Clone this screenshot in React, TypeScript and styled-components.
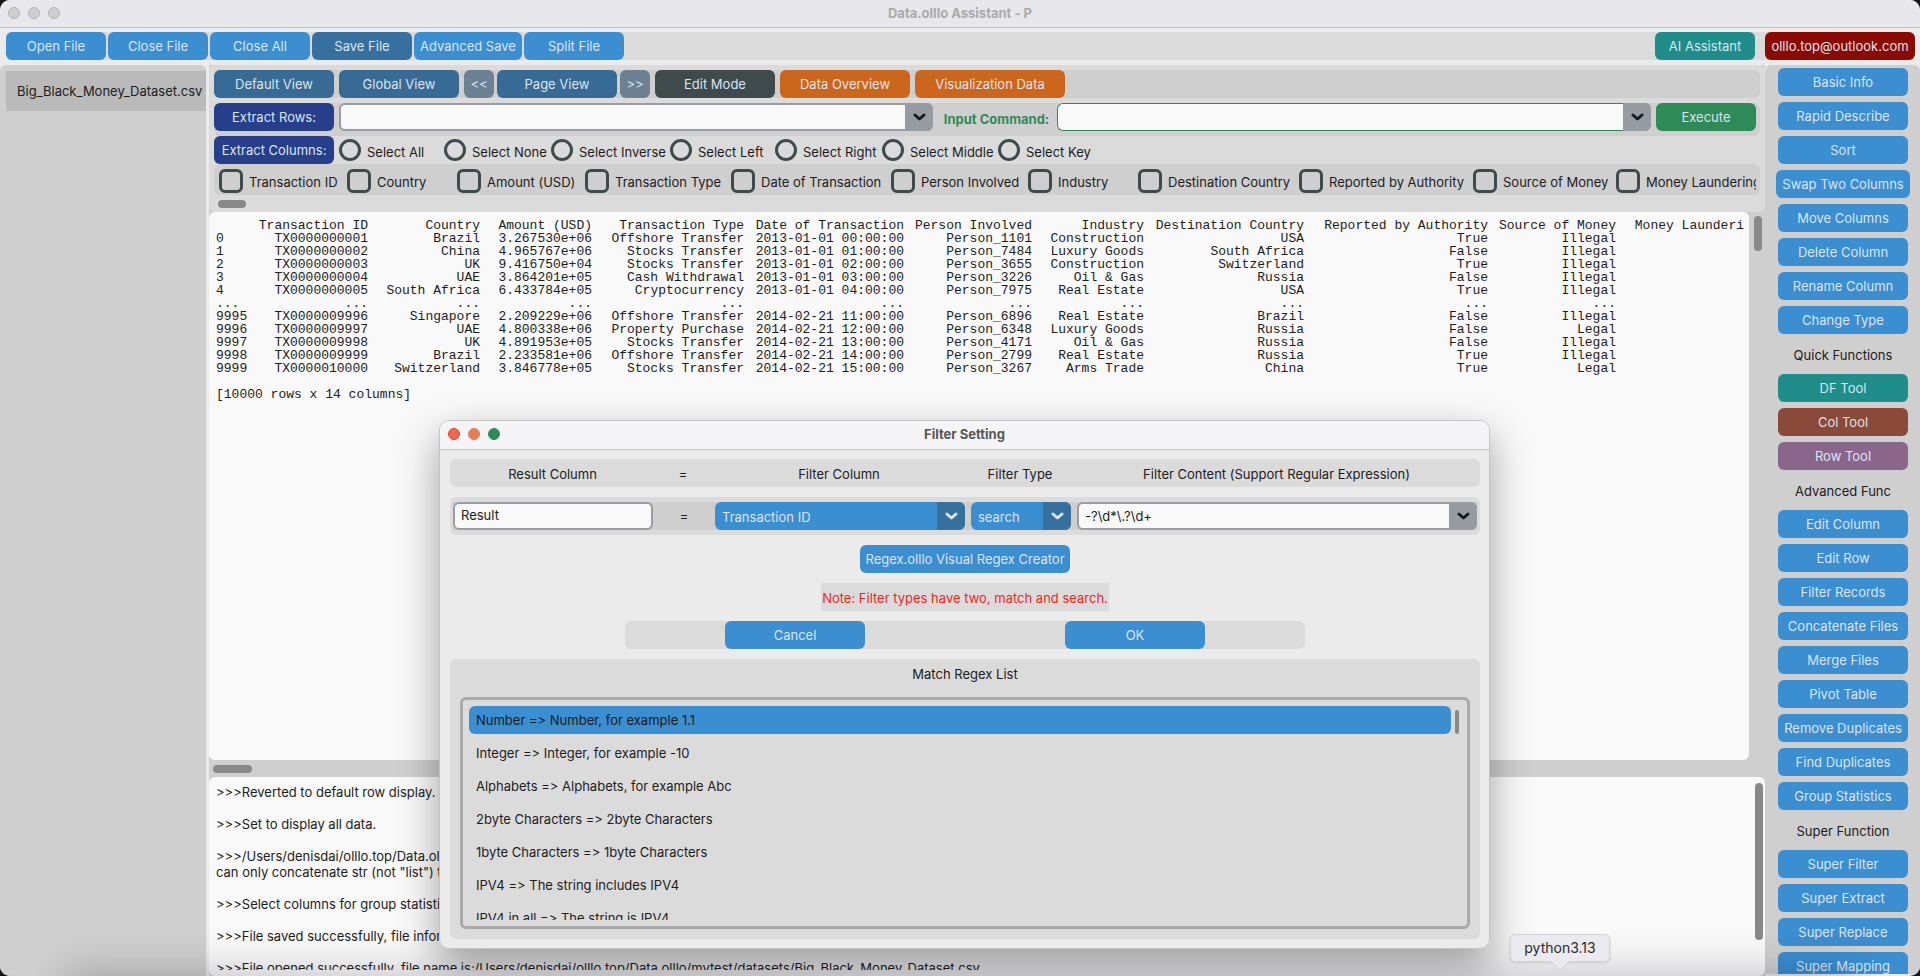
import React from "react";
import styled, { createGlobalStyle } from "styled-components";

const GlobalStyle = createGlobalStyle`
  *, *::before, *::after { box-sizing: border-box; }
  body {
    margin: 0;
    background: #161616;
    color: #1c1c1c;
    font-family: Inter, "Liberation Sans", sans-serif;
    font-size: 13px;
    font-feature-settings: "calt" 0;
    line-height: 16px;
    overflow: hidden;
  }
  button, input, select { font: inherit; margin: 0; }
`;

const tone = {
  blue: "#3b8ed0",
  steel: "#36709f",
  view: "#376a94",
  slate: "#6d8194",
  navy: "#273f8a",
  dark: "#3e4a4b",
  orange: "#cc661c",
  teal: "#1f8e8b",
  maroon: "#8b0a00",
  green: "#2e8b57",
  brown: "#8b4939",
  plum: "#8b668b",
};
type Tone = keyof typeof tone;

const AppWindow = styled.div`
  position: relative;
  display: flex;
  flex-direction: column;
  height: 100vh;
  overflow: hidden;
  border-radius: 10px;
  background: #ebebeb;
`;

const TitleBar = styled.header<{ $active?: boolean }>`
  position: relative;
  display: flex;
  flex: none;
  align-items: center;
  justify-content: center;
  height: ${(p) => (p.$active ? 29 : 28)}px;
  padding-bottom: 2px;
  border-bottom: 1px solid ${(p) => (p.$active ? "#c6c6c8" : "#bfbfc1")};
  background: ${(p) => (p.$active ? "#f5f5f7" : "#e8e8ec")};
  color: ${(p) => (p.$active ? "#565656" : "#aaaaaa")};
`;

const Title = styled.h1`
  margin: 0;
  font-size: 13px;
  font-weight: 700;
  line-height: 16px;
`;

const Lights = styled.div`
  position: absolute;
  left: 8px;
  top: 7px;
  display: flex;
  gap: 8px;
`;

const Light = styled.button<{ $fill: string; $edge: string }>`
  width: 12px;
  height: 12px;
  padding: 0;
  border: 1px solid ${(p) => p.$edge};
  border-radius: 50%;
  background: ${(p) => p.$fill};
`;

const Button = styled.button<{ $tone?: Tone; $w?: number }>`
  flex: none;
  width: ${(p) => (p.$w ? `${p.$w}px` : "100%")};
  height: 28px;
  padding: 0;
  border: 0;
  border-radius: 6px;
  background: ${(p) => tone[p.$tone ?? "blue"]};
  color: #dce4ee;
  white-space: nowrap;
`;

const Toolbar = styled.nav`
  flex: none;
  padding: 4px 5px 5px 6px;
`;

const ToolbarBand = styled.div`
  display: flex;
  gap: 2px;
  border-radius: 6px;
  background: #dbdbdb;
`;

const Account = styled.div`
  display: flex;
  gap: 10px;
  margin-left: auto;
`;

const Body = styled.div`
  display: flex;
  flex: 1;
  min-height: 0;
`;

const FilePanel = styled.aside`
  flex: none;
  width: 206px;
  margin-right: 3px;
  padding: 6px 0 0 6px;
  border-radius: 6px 6px 0 0;
  background: #cfcfcf;
`;

const FileItem = styled.button`
  width: 100%;
  height: 40px;
  padding: 0 0 0 11px;
  overflow: hidden;
  border: 0;
  background: #bababa;
  color: #1c1c1c;
  text-align: left;
  white-space: nowrap;
`;

const Main = styled.main`
  display: flex;
  flex: 1;
  flex-direction: column;
  min-width: 0;
  background: #cfcfcf;
`;

const ControlPanel = styled.section`
  flex: none;
  padding: 5px 5px 4px;
  border-radius: 6px;
  background: #dbdbdb;
`;

const ViewRow = styled.div`
  display: flex;
  gap: 5px;
  margin-bottom: 5px;
  border-radius: 6px;
  background: #cfcfcf;
`;

const Pager = styled.div`
  display: flex;
  gap: 3px;
`;

const CommandRow = styled.div`
  display: flex;
  gap: 5px;
  height: 33px;
  padding-right: 4px;
  border-radius: 6px;
  background: #cfcfcf;
`;

const CommandLabel = styled.label`
  flex: none;
  width: 114px;
  padding: 8px 0 0 3px;
  color: #2e8b57;
  font-weight: 700;
  text-align: center;
`;

const EditableCombo = styled.div<{ $edge?: string; $thick?: boolean }>`
  display: flex;
  flex: 1;
  min-width: 0;
  height: 28px;
  overflow: hidden;
  border-radius: 6px;
  background: #979da2;

  input {
    flex: 1;
    min-width: 0;
    padding: 0 6px;
    border: ${(p) => (p.$edge ? 1 : 2)}px solid ${(p) => p.$edge ?? "#979da2"};
    border-right: 0;
    border-radius: 6px 0 0 6px;
    outline: 0;
    background: #f9f9fa;
    color: #1c1c1c;
  }

  button {
    display: flex;
    align-items: center;
    justify-content: center;
    width: 28px;
    padding: 0;
    border: 0;
    background: #979ba2;
    color: #1a1a1a;
  }
`;

const SelectionRow = styled.div`
  display: flex;
  border-radius: 6px;
  background: #dbdbdb;
`;

const ColumnRow = styled.div`
  display: flex;
  height: 31px;
  padding: 5px 4px 0 5px;
  overflow: hidden;
  border-radius: 6px;
  background: #cfcfcf;
`;

const ColumnClip = styled.div`
  display: flex;
  flex: 1;
  min-width: 0;
  overflow: hidden;
`;

const Choice = styled.label<{ $w: number }>`
  display: flex;
  flex: none;
  gap: 6px;
  width: ${(p) => p.$w}px;
  white-space: nowrap;

  span { padding-top: 5px; }
`;

const RadioGroup = styled.div`
  display: flex;
  padding: 3px 0 0 5px;
`;

const Radio = styled.input`
  appearance: none;
  flex: none;
  width: 22px;
  height: 22px;
  border: 3px solid #3e4a4b;
  border-radius: 50%;
`;

const Checkbox = styled.input`
  appearance: none;
  flex: none;
  width: 24px;
  height: 24px;
  border: 3px solid #3e4a4b;
  border-radius: 6px;
`;

const HorizontalTrack = styled.div<{ $h: number }>`
  display: flex;
  flex: none;
  align-items: flex-start;
  height: ${(p) => p.$h}px;
  padding: 5px 0 0 4px;
`;

const Thumb = styled.div<{ $w: number; $h: number }>`
  flex: none;
  width: ${(p) => p.$w}px;
  height: ${(p) => p.$h}px;
  border-radius: 4px;
  background: #898989;
`;

const DataArea = styled.section`
  display: flex;
  flex: 1;
  min-height: 0;
`;

const DataSheet = styled.div`
  flex: 1;
  min-width: 0;
  padding: 7px 5px 0 7px;
  overflow: hidden;
  border-radius: 6px;
  background: #f9f9fa;
  font-family: "Courier New", "Liberation Mono", monospace;
  font-size: 13px;
  line-height: 13px;
`;

const VerticalTrack = styled.div`
  flex: none;
  width: 16px;
  padding: 4px 0 0 5px;
`;

const FrameTable = styled.table`
  width: 1528px;
  table-layout: fixed;
  border-collapse: collapse;

  th, td {
    height: 13px;
    padding: 0;
    font-weight: 400;
    line-height: 13px;
    text-align: right;
    white-space: pre;
  }

  th:first-child, td:first-child { text-align: left; }
`;

const Summary = styled.p`
  margin: 13px 0 0;
`;

const Console = styled.section`
  display: flex;
  flex: none;
  height: 199px;
  padding: 6px 2px 6px 7px;
  border-radius: 6px;
  background: #f9f9fa;
`;

const Log = styled.pre`
  flex: 1;
  min-width: 0;
  margin: 0;
  padding-top: 1px;
  overflow: hidden;
  font-family: inherit;
`;

const FunctionPanel = styled.aside`
  display: flex;
  flex: none;
  flex-direction: column;
  align-items: center;
  gap: 6px;
  width: 155px;
  margin-bottom: 2px;
  padding: 3px 12px 0 13px;
  overflow: hidden;
  border-radius: 6px 6px 0 0;
  background: #cfcfcf;
`;

const GroupTitle = styled.h2`
  flex: none;
  height: 28px;
  margin: 0;
  padding-top: 7px;
  font-size: 13px;
  font-weight: 400;
  line-height: 16px;
`;

const Dialog = styled.section`
  position: absolute;
  top: 420px;
  left: calc(50% - 521px);
  width: 1051px;
  overflow: hidden;
  border: 1px solid #c4c4c4;
  border-radius: 10px;
  background: #ebebec;
`;

const DialogShadow = styled.div`
  position: absolute;
  top: 420px;
  left: calc(50% - 521px);
  width: 1051px;
  height: 529px;
  border-radius: 10px;
  box-shadow: 0 16px 40px rgba(0, 0, 0, 0.36);
`;

const DialogBody = styled.div`
  display: flex;
  flex-direction: column;
  align-items: center;
  gap: 10px;
  padding: 9px 9px 9px 10px;
`;

const HeadRow = styled.div`
  display: grid;
  grid-template-columns: 205px 56px 256px 106px 1fr;
  align-items: center;
  width: 100%;
  height: 28px;
  padding-top: 2px;
  border-radius: 6px;
  background: #dbdbdb;
  text-align: center;
`;

const FieldFrame = styled.div`
  width: 100%;
  padding: 5px 3px;
  border-radius: 6px;
  background: #dbdbdb;
`;

const FieldRow = styled.div`
  display: grid;
  grid-template-columns: 200px 50px 250px 100px 1fr;
  gap: 6px;
  align-items: center;
  background: #cfcfcf;
  text-align: center;
`;

const Entry = styled.input`
  width: 100%;
  height: 28px;
  padding: 0 6px 2px;
  border: 2px solid #979da2;
  border-radius: 6px;
  outline: 0;
  background: #f9f9fa;
  color: #1c1c1c;
`;

const SelectBox = styled.div`
  display: flex;
  position: relative;
  height: 28px;
  overflow: hidden;
  border-radius: 6px;
  background: #3b8ed0;

  select {
    appearance: none;
    width: 100%;
    padding: 2px 28px 0 7px;
    border: 0;
    outline: 0;
    background: transparent;
    color: #dce4ee;
  }
`;

const SelectArrow = styled.span`
  position: absolute;
  top: 0;
  right: 0;
  display: flex;
  align-items: center;
  justify-content: center;
  width: 28px;
  height: 28px;
  background: #36709f;
  color: #dce4ee;
  pointer-events: none;
`;

const Note = styled.p`
  height: 28px;
  margin: 0;
  padding: 7px 1px 0;
  background: #dbdbdb;
  color: #fb2414;
`;

const ActionBar = styled.div`
  display: flex;
  justify-content: space-between;
  width: 680px;
  padding: 0 100px;
  border-radius: 6px;
  background: #dbdbdb;
`;

const RegexPanel = styled.section`
  width: 100%;
  height: 280px;
  padding: 7px 10px 10px;
  border-radius: 6px;
  background: #dbdbdb;
`;

const RegexTitle = styled.h2`
  margin: 0 0 15px;
  font-size: 13px;
  font-weight: 400;
  line-height: 16px;
  text-align: center;
`;

const ListBox = styled.div`
  display: flex;
  gap: 4px;
  height: 232px;
  padding: 6px 8px 6px 6px;
  border: 3px solid #a9a9a9;
  border-radius: 6px;
`;

const RegexList = styled.ul`
  display: flex;
  flex: 1;
  flex-direction: column;
  gap: 5px;
  height: 214px;
  margin: 0;
  padding: 0;
  overflow: hidden;
  list-style: none;
`;

const RegexOption = styled.button<{ $selected?: boolean }>`
  display: block;
  width: 100%;
  height: 28px;
  padding: 0 7px;
  border: 0;
  border-radius: 6px;
  background: ${(p) => (p.$selected ? "#3b8ed0" : "transparent")};
  color: #1c1c1c;
  text-align: left;
`;

const ListThumb = styled.div`
  width: 4px;
  height: 24px;
  margin-top: 4px;
  border-radius: 2px;
  background: #898989;
`;

const DockShade = styled.div`
  position: absolute;
  top: 100%;
  left: 70px;
  right: 70px;
  height: 40px;
  box-shadow: 0 0 40px 4px rgba(0, 0, 20, 0.22);
  pointer-events: none;
`;

const DockTip = styled.div`
  position: absolute;
  bottom: 14px;
  left: calc(50% + 550px);
  width: 100px;
  height: 28px;
  border: 1px solid #d2d2d6;
  border-radius: 5px;
  background: #ebebef;
  color: #2a2a2a;
  font-size: 14px;
  line-height: 26px;
  text-align: center;
  box-shadow: 0 1px 3px rgba(0, 0, 0, 0.12);

  svg {
    position: absolute;
    top: 26px;
    left: 40px;
  }
`;

const Chevron = () => (
  <svg width="14" height="10" viewBox="0 0 14 10" fill="none" stroke="currentColor" strokeWidth="3" strokeLinecap="round" strokeLinejoin="round" aria-hidden="true">
    <path d="M3 3 7.500 7 12 3" />
  </svg>
);

const radios: [string, number][] = [
  ["Select All", 105], ["Select None", 107], ["Select Inverse", 119], ["Select Left", 105],
  ["Select Right", 107], ["Select Middle", 116], ["Select Key", 105],
];

const columns: [string, number][] = [
  ["Transaction ID", 128], ["Country", 110], ["Amount (USD)", 128], ["Transaction Type", 146],
  ["Date of Transaction", 160], ["Person Involved", 137], ["Industry", 110], ["Destination Country", 161],
  ["Reported by Authority", 174], ["Source of Money", 143], ["Money Laundering", 140],
];

const frameWidths = [32, 120, 112, 112, 152, 160, 128, 112, 160, 184, 128, 128];
const frameHead = [
  "", "Transaction ID", "Country", "Amount (USD)", "Transaction Type", "Date of Transaction", "Person Involved",
  "Industry", "Destination Country", "Reported by Authority", "Source of Money", "Money Launderi",
];
const dots = "...";
const frameRows = [
  ["0", "TX0000000001", "Brazil", "3.267530e+06", "Offshore Transfer", "2013-01-01 00:00:00", "Person_1101", "Construction", "USA", "True", "Illegal", ""],
  ["1", "TX0000000002", "China", "4.965767e+06", "Stocks Transfer", "2013-01-01 01:00:00", "Person_7484", "Luxury Goods", "South Africa", "False", "Illegal", ""],
  ["2", "TX0000000003", "UK", "9.416750e+04", "Stocks Transfer", "2013-01-01 02:00:00", "Person_3655", "Construction", "Switzerland", "True", "Illegal", ""],
  ["3", "TX0000000004", "UAE", "3.864201e+05", "Cash Withdrawal", "2013-01-01 03:00:00", "Person_3226", "Oil & Gas", "Russia", "False", "Illegal", ""],
  ["4", "TX0000000005", "South Africa", "6.433784e+05", "Cryptocurrency", "2013-01-01 04:00:00", "Person_7975", "Real Estate", "USA", "True", "Illegal", ""],
  [dots, dots, dots, dots, dots, dots, dots, dots, dots, dots, dots, ""],
  ["9995", "TX0000009996", "Singapore", "2.209229e+06", "Offshore Transfer", "2014-02-21 11:00:00", "Person_6896", "Real Estate", "Brazil", "False", "Illegal", ""],
  ["9996", "TX0000009997", "UAE", "4.800338e+06", "Property Purchase", "2014-02-21 12:00:00", "Person_6348", "Luxury Goods", "Russia", "False", "Legal", ""],
  ["9997", "TX0000009998", "UK", "4.891953e+05", "Stocks Transfer", "2014-02-21 13:00:00", "Person_4171", "Oil & Gas", "Russia", "False", "Illegal", ""],
  ["9998", "TX0000009999", "Brazil", "2.233581e+06", "Offshore Transfer", "2014-02-21 14:00:00", "Person_2799", "Real Estate", "Russia", "True", "Illegal", ""],
  ["9999", "TX0000010000", "Switzerland", "3.846778e+05", "Stocks Transfer", "2014-02-21 15:00:00", "Person_3267", "Arms Trade", "China", "True", "Legal", ""],
];

const log = `>>>Reverted to default row display.

>>>Set to display all data.

>>>/Users/denisdai/olllo.top/Data.olllo
can only concatenate str (not "list") to str

>>>Select columns for group statistics.

>>>File saved successfully, file information

>>>File opened successfully, file name is:/Users/denisdai/olllo.top/Data.olllo/mytest/datasets/Big_Black_Money_Dataset.csv`;

type FnItem = { text: string; heading?: boolean; tone?: Tone; w?: number };
const functions: FnItem[] = [
  { text: "Basic Info" }, { text: "Rapid Describe" }, { text: "Sort" }, { text: "Swap Two Columns", w: 134 },
  { text: "Move Columns" }, { text: "Delete Column" }, { text: "Rename Column" }, { text: "Change Type" },
  { text: "Quick Functions", heading: true },
  { text: "DF Tool", tone: "teal" }, { text: "Col Tool", tone: "brown" }, { text: "Row Tool", tone: "plum" },
  { text: "Advanced Func", heading: true },
  { text: "Edit Column" }, { text: "Edit Row" }, { text: "Filter Records" }, { text: "Concatenate Files" },
  { text: "Merge Files" }, { text: "Pivot Table" }, { text: "Remove Duplicates" }, { text: "Find Duplicates" },
  { text: "Group Statistics" },
  { text: "Super Function", heading: true },
  { text: "Super Filter" }, { text: "Super Extract" }, { text: "Super Replace" }, { text: "Super Mapping" },
];

const regexes = [
  "Number => Number, for example 1.1",
  "Integer => Integer, for example -10",
  "Alphabets => Alphabets, for example Abc",
  "2byte Characters => 2byte Characters",
  "1byte Characters => 1byte Characters",
  "IPV4 => The string includes IPV4",
  "IPV4 in all => The string is IPV4",
];

function FilterDialog() {
  return (
    <Dialog role="dialog" aria-label="Filter Setting">
      <TitleBar $active>
        <Lights>
          <Light $fill="#ec6a50" $edge="#f0402c" aria-label="Close" />
          <Light $fill="#e97c55" $edge="#dd8255" aria-label="Minimize" />
          <Light $fill="#2e8b57" $edge="#2e8b57" aria-label="Zoom" />
        </Lights>
        <Title as="h2">Filter Setting</Title>
      </TitleBar>
      <DialogBody>
        <HeadRow>
          <label htmlFor="result">Result Column</label>
          <span>=</span>
          <label htmlFor="filter-column">Filter Column</label>
          <label htmlFor="filter-type">Filter Type</label>
          <label htmlFor="filter-content">Filter Content (Support Regular Expression)</label>
        </HeadRow>
        <FieldFrame>
          <FieldRow>
            <Entry id="result" defaultValue="Result" />
            <span>=</span>
            <SelectBox>
              <select id="filter-column"><option>Transaction ID</option></select>
              <SelectArrow><Chevron /></SelectArrow>
            </SelectBox>
            <SelectBox>
              <select id="filter-type"><option>search</option><option>match</option></select>
              <SelectArrow><Chevron /></SelectArrow>
            </SelectBox>
            <EditableCombo>
              <input id="filter-content" defaultValue={"-?\\d*\\.?\\d+"} />
              <button aria-label="Show filter contents"><Chevron /></button>
            </EditableCombo>
          </FieldRow>
        </FieldFrame>
        <Button $w={210}>Regex.olllo Visual Regex Creator</Button>
        <Note>Note: Filter types have two, match and search.</Note>
        <ActionBar>
          <Button $w={140}>Cancel</Button>
          <Button $w={140}>OK</Button>
        </ActionBar>
        <RegexPanel>
          <RegexTitle>Match Regex List</RegexTitle>
          <ListBox>
            <RegexList>
              {regexes.map((text, i) => (
                <li key={text}><RegexOption $selected={i === 0}>{text}</RegexOption></li>
              ))}
            </RegexList>
            <ListThumb />
          </ListBox>
        </RegexPanel>
      </DialogBody>
    </Dialog>
  );
}

export default function App() {
  return (
    <>
      <GlobalStyle />
      <AppWindow>
        <TitleBar>
          <Lights>
            <Light $fill="#cfcfcf" $edge="#b4b4b4" aria-label="Close" />
            <Light $fill="#cfcfcf" $edge="#b4b4b4" aria-label="Minimize" />
            <Light $fill="#cfcfcf" $edge="#b4b4b4" aria-label="Zoom" />
          </Lights>
          <Title>Data.olllo Assistant - P</Title>
        </TitleBar>
        <Toolbar>
          <ToolbarBand>
            <Button $w={100}>Open File</Button>
            <Button $w={100}>Close File</Button>
            <Button $w={100}>Close All</Button>
            <Button $w={100} $tone="steel">Save File</Button>
            <Button $w={108}>Advanced Save</Button>
            <Button $w={100}>Split File</Button>
            <Account>
              <Button $w={100} $tone="teal">AI Assistant</Button>
              <Button $w={150} $tone="maroon">olllo.top@outlook.com</Button>
            </Account>
          </ToolbarBand>
        </Toolbar>
        <Body>
          <FilePanel>
            <FileItem>Big_Black_Money_Dataset.csv</FileItem>
          </FilePanel>
          <Main>
            <ControlPanel>
              <ViewRow>
                <Button $w={120} $tone="view">Default View</Button>
                <Button $w={120} $tone="view">Global View</Button>
                <Pager>
                  <Button $w={30} $tone="slate">&lt;&lt;</Button>
                  <Button $w={120} $tone="view">Page View</Button>
                  <Button $w={30} $tone="slate">&gt;&gt;</Button>
                </Pager>
                <Button $w={120} $tone="dark">Edit Mode</Button>
                <Button $w={130} $tone="orange">Data Overview</Button>
                <Button $w={150} $tone="orange">Visualization Data</Button>
              </ViewRow>
              <CommandRow>
                <Button $w={120} $tone="navy">Extract Rows:</Button>
                <EditableCombo>
                  <input aria-label="Extract rows" />
                  <button aria-label="Show row filters"><Chevron /></button>
                </EditableCombo>
                <CommandLabel htmlFor="command">Input Command:</CommandLabel>
                <EditableCombo $edge="#2e8b57">
                  <input id="command" />
                  <button aria-label="Show commands"><Chevron /></button>
                </EditableCombo>
                <Button $w={100} $tone="green">Execute</Button>
              </CommandRow>
              <SelectionRow>
                <Button $w={120} $tone="navy">Extract Columns:</Button>
                <RadioGroup>
                  {radios.map(([text, w]) => (
                    <Choice key={text} $w={w}>
                      <Radio type="radio" name="selection" />
                      <span>{text}</span>
                    </Choice>
                  ))}
                </RadioGroup>
              </SelectionRow>
              <ColumnRow>
                <ColumnClip>
                  {columns.map(([text, w]) => (
                    <Choice key={text} $w={w}>
                      <Checkbox type="checkbox" />
                      <span>{text}</span>
                    </Choice>
                  ))}
                </ColumnClip>
              </ColumnRow>
              <HorizontalTrack $h={13}><Thumb $w={28} $h={8} /></HorizontalTrack>
            </ControlPanel>
            <DataArea>
              <DataSheet>
                <FrameTable>
                  <colgroup>{frameWidths.map((w, i) => <col key={i} width={w} />)}</colgroup>
                  <thead>
                    <tr>{frameHead.map((h, i) => <th key={i} scope="col">{h}</th>)}</tr>
                  </thead>
                  <tbody>
                    {frameRows.map((row) => (
                      <tr key={row[0]}>{row.map((cell, i) => <td key={i}>{cell}</td>)}</tr>
                    ))}
                  </tbody>
                </FrameTable>
                <Summary>[10000 rows x 14 columns]</Summary>
              </DataSheet>
              <VerticalTrack><Thumb $w={8} $h={35} /></VerticalTrack>
            </DataArea>
            <HorizontalTrack $h={17}><Thumb $w={39} $h={8} /></HorizontalTrack>
            <Console>
              <Log>{log}</Log>
              <Thumb $w={8} $h={157} />
            </Console>
          </Main>
          <FunctionPanel>
            {functions.map((f) =>
              f.heading ? (
                <GroupTitle key={f.text}>{f.text}</GroupTitle>
              ) : (
                <Button key={f.text} $tone={f.tone} $w={f.w}>{f.text}</Button>
              ),
            )}
          </FunctionPanel>
        </Body>
        <DialogShadow />
        <DockShade />
        <FilterDialog />
        <DockTip>
          python3.13
          <svg width="18" height="10" viewBox="0 0 18 10" aria-hidden="true">
            <path d="M0 0H18L10 8Q9 9 8 8Z" fill="#ebebef" />
            <path d="M0 0.5 8 8.5Q9 9.500 10 8.500L18 0.500" fill="none" stroke="#d2d2d6" />
          </svg>
        </DockTip>
      </AppWindow>
    </>
  );
}
